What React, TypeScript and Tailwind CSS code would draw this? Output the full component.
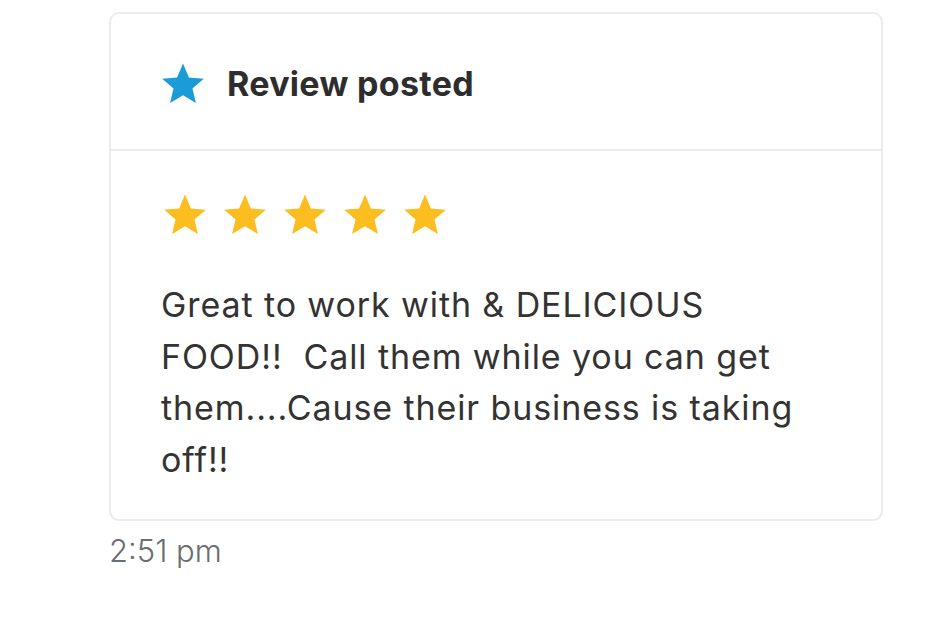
const Star = ({ className }: { className: string }) => (
  <svg viewBox="0 0 24 24" className={className} fill="currentColor">
    <path d="M12 1.8l2.95 6.9 7.45.62-5.66 4.9 1.72 7.3L12 17.6l-6.46 3.92 1.72-7.3-5.66-4.9 7.45-.62z" />
  </svg>
);

export default function App() {
  return (
    <div className="min-h-screen bg-white pl-[109px] pr-[48px] pt-[12px] font-['Inter',sans-serif]">
      <div className="w-[774px] rounded-[10px] border-2 border-[#ebebeb]">
        <div className="flex h-[137px] items-center gap-[20px] border-b-2 border-[#ebebeb] pl-[48px] pt-[4px]">
          <Star className="h-[48px] w-[48px] text-[#1b9bd7]" />
          <span className="text-[34px] font-bold tracking-[0.3px] text-[#2d2d2d]">Review posted</span>
        </div>
        <div className="px-[50px] pt-[40px] pb-[34px]">
          <div className="flex gap-[12px]">
            {[0, 1, 2, 3, 4].map((i) => (
              <Star key={i} className="h-[48px] w-[48px] text-[#fbbd1f]" />
            ))}
          </div>
          <p className="mt-[40px] whitespace-nowrap text-[34px] leading-[51.5px] tracking-[0.9px] text-[#333333]">
            Great to work with &amp; DELICIOUS
            <br />
            FOOD!!&nbsp; Call them while you can get
            <br />
            them....Cause their business is taking
            <br />
            off!!
          </p>
        </div>
      </div>
      <div className="mt-[7px] text-[31px] font-light text-[#6b6e70]">2:51 pm</div>
    </div>
  );
}
